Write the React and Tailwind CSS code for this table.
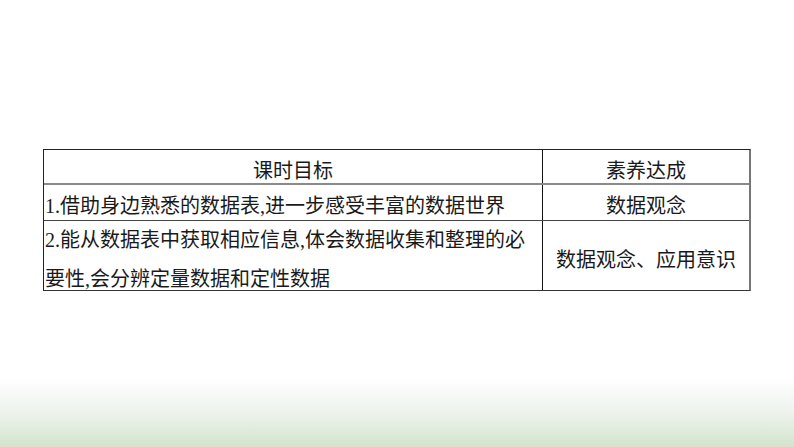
import React from 'react'

const font = "font-['Liberation_Serif','Noto_Sans_CJK_SC',serif]"

const App = () => {
  return (
    <div className={`w-[794px] h-[447px] bg-white flex flex-col ${font} text-[20px] text-[#1a1a1a]`}>
      <div className="h-[149px]" />
      <div className="ml-[43px] w-[708px] border border-[#222] border-r-[#777] border-r-2 border-b-[#333]">
        <div className="flex h-[35px] border-b-2 border-[#8a8a8a]">
          <div className="w-[499px] border-r border-[#111] text-center leading-[35px] pt-[4px]">课时目标</div>
          <div className="flex-1 text-center leading-[35px] pt-[4px]">素养达成</div>
        </div>
        <div className="flex h-[36px] border-b border-[#444]">
          <div className="w-[499px] border-r border-[#111] pl-[1px] leading-[36px] pt-[3px]">1.借助身边熟悉的数据表,进一步感受丰富的数据世界</div>
          <div className="flex-1 text-center leading-[36px] pt-[3px]">数据观念</div>
        </div>
        <div className="flex h-[69px]">
          <div className="w-[499px] border-r border-[#111] pl-[1px] leading-[39px] whitespace-pre-line">
            {'2.能从数据表中获取相应信息,体会数据收集和整理的必\n要性,会分辨定量数据和定性数据'}
          </div>
          <div className="flex-1 flex items-center justify-center pt-[8px]">数据观念、应用意识</div>
        </div>
      </div>
      <div className="mt-auto h-[70px] bg-gradient-to-b from-white via-[#eef3ee] to-[#d2e4cc]" />
    </div>
  )
}

export default App
